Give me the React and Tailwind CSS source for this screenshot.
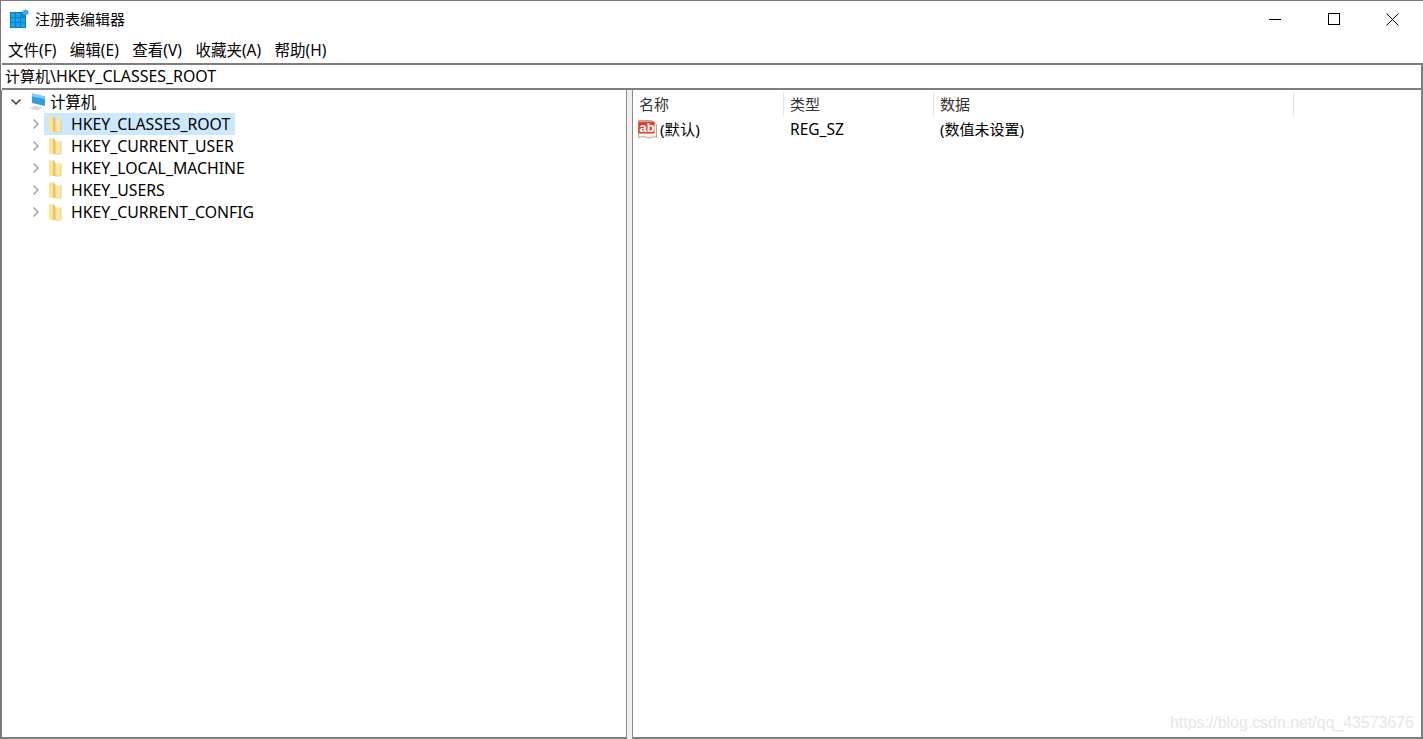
import { ChevronDown, ChevronRight } from "lucide-react";

const font = { fontFamily: '"Noto Sans", "Noto Sans CJK SC", sans-serif' };

const menus = ["文件(F)", "编辑(E)", "查看(V)", "收藏夹(A)", "帮助(H)"];
const keys = ["HKEY_CLASSES_ROOT", "HKEY_CURRENT_USER", "HKEY_LOCAL_MACHINE", "HKEY_USERS", "HKEY_CURRENT_CONFIG"];
const columns = [
  { name: "名称", w: "w-[151px]" },
  { name: "类型", w: "w-[150px]" },
  { name: "数据", w: "w-[360px]" },
];

function AppIcon() {
  return (
    <svg width="20" height="20" viewBox="0 0 20 20" className="shrink-0">
      <rect x="0" y="3" width="16" height="16" fill="#0b7fc4" />
      <g fill="#19a4e8">
        <rect x="1" y="4" width="4" height="4" />
        <rect x="6" y="4" width="4" height="4" />
        <rect x="1" y="9" width="4" height="4" />
        <rect x="6" y="9" width="4" height="4" />
        <rect x="11" y="9" width="4" height="4" />
        <rect x="1" y="14" width="4" height="4" />
        <rect x="6" y="14" width="4" height="4" />
        <rect x="11" y="14" width="4" height="4" />
      </g>
      <path d="M15.5 0.5l3 1.5v3l-3 1.5-3-1.5v-3z" fill="#3fa9dc" />
    </svg>
  );
}

function ComputerIcon() {
  return (
    <svg width="18" height="18" viewBox="0 0 18 18" className="shrink-0">
      <path d="M4 0.5l13 3v9.5L4 10z" fill="#2f9fe0" />
      <path d="M4 0.5l13 3v2.5L4 3.5z" fill="#7fcdf2" />
      <path d="M1 15l6-2 8 2-6 2.5z" fill="#d5d9dc" />
    </svg>
  );
}

function FolderIcon() {
  return (
    <svg width="14" height="17" viewBox="0 0 14 17" className="shrink-0">
      <path d="M1 0.5h5v15.5H2.5L1 14.5z" fill="#fbe59b" />
      <path d="M6 3l7 0.5V16H6z" fill="#fce9a8" />
      <path d="M5 0.5h1l1.5 2.5v13H5z" fill="#eec25e" />
      <path d="M13 3.5V16H7" stroke="#eccd7c" strokeWidth="1" fill="none" />
    </svg>
  );
}

function ValueIcon() {
  return (
    <svg width="21" height="21" viewBox="0 0 21 21" className="shrink-0">
      <path d="M1.5 1.5h13l5 4v13c-3-2-5 1-9 0s-6-1-9 0z" fill="#f5f3f2" stroke="#a9a6a4" />
      <rect x="1.5" y="2.5" width="16" height="12" rx="1" fill="#e0432b" />
      <text x="2.5" y="12.5" fontSize="13" fontWeight="700" fill="#fff" fontFamily="Liberation Sans, sans-serif">ab</text>
    </svg>
  );
}

export default function App() {
  return (
    <div style={font} className="relative w-[1423px] h-[739px] flex flex-col overflow-hidden bg-white border-t border-l border-[#7a7a7a] text-[16px] text-black">
      <div className="h-[36px] flex items-center shrink-0 pl-[9px]">
        <AppIcon />
        <span className="ml-[5px] text-[15px]">注册表编辑器</span>
        <div className="ml-auto flex items-center pr-px">
          <div className="w-[59px] flex justify-center">
            <div className="w-[12px] h-px bg-black" />
          </div>
          <div className="w-[59px] flex justify-center">
            <div className="w-[12px] h-[12px] border border-black" />
          </div>
          <div className="w-[59px] flex justify-center">
            <svg width="13" height="13" viewBox="0 0 13 13">
              <path d="M0.5 0.5l12 12M12.5 0.5l-12 12" stroke="#000" strokeWidth="1" fill="none" />
            </svg>
          </div>
        </div>
      </div>

      <div className="h-[26px] flex items-center shrink-0 pl-[7px] pt-[2px] gap-[13.5px] text-[15.5px] bg-white">
        {menus.map((m) => (
          <span key={m}>{m}</span>
        ))}
      </div>

      <div className="h-[27px] shrink-0 flex items-center border-y-2 border-[#7f7f7f] border-r-2 ml-px pl-[3px] text-[15px]">
        计算机<span className="text-[15.9px]">\HKEY_CLASSES_ROOT</span>
      </div>

      <div className="flex-1 flex min-h-0">
        <div className="w-[625px] shrink-0 border-l border-b-2 border-[#7f7f7f] pt-px">
          <div className="h-[22px] flex items-center pl-[6px]">
            <ChevronDown size={16} strokeWidth={2.5} className="text-[#404040] shrink-0" />
            <span className="ml-[4px]"><ComputerIcon /></span>
            <span className="ml-[4px] pt-[2px] text-[15.4px]">计算机</span>
          </div>
          {keys.map((k, i) => (
            <div key={k} className="h-[22px] flex items-center pl-[26px]">
              <ChevronRight size={16} strokeWidth={2.5} className="text-[#a6a6a6] shrink-0" />
              <div className={`h-[22px] flex items-center pl-[4px] pr-[5px] ${i === 0 ? "bg-[#cce8ff]" : ""}`}>
                <FolderIcon />
                <span className="ml-[9px] pt-[2px] whitespace-nowrap text-[15.8px]">{k}</span>
              </div>
            </div>
          ))}
        </div>

        <div className="w-[7px] shrink-0 bg-[#f0f0f0] border-x border-[#8c8c8c]" />

        <div className="flex-1 border-b-2 border-r-2 border-[#7f7f7f] pt-[2px] min-w-0">
          <div className="h-[25px] flex">
            {columns.map((c) => (
              <div key={c.name} className={`${c.w} border-r border-[#e5e5e5] pl-[6px] flex items-center text-[15px] text-[#333]`}>
                {c.name}
              </div>
            ))}
          </div>
          <div className="h-[25px] flex items-center relative">
            <div className="w-[151px] flex items-center pl-[4px]">
              <ValueIcon />
              <span className="ml-[2px] text-[15.3px]">(默认)</span>
            </div>
            <div className="w-[150px] pl-[6px] text-[15.5px]">REG_SZ</div>
            <div className="pl-[6px] text-[15px]">(数值未设置)</div>
          </div>
        </div>
      </div>

      <span className="absolute left-[1169px] top-[710px] text-[15.9px] text-[#e6e6e6]" style={{ fontFamily: '"Liberation Sans", sans-serif' }}>
        https://blog.csdn.net/qq_43573676
      </span>
    </div>
  );
}
